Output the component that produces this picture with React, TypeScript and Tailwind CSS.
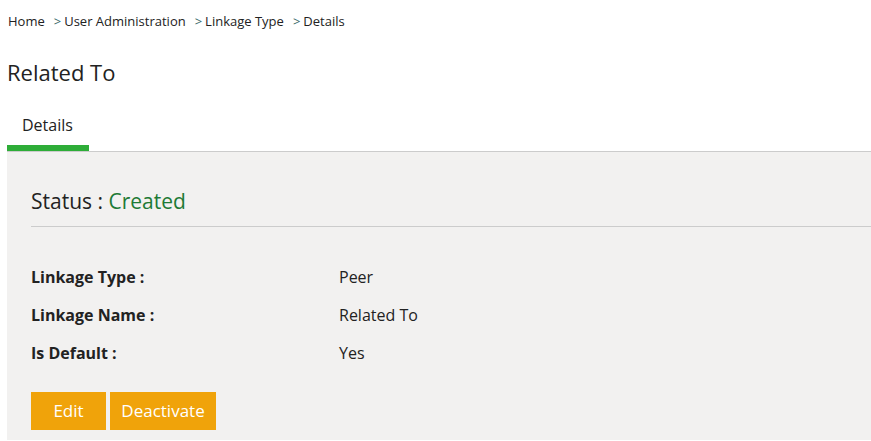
export default function App() {
  const rows = [
    { label: "Linkage Type :", value: "Peer" },
    { label: "Linkage Name :", value: "Related To" },
    { label: "Is Default :", value: "Yes" },
  ];

  return (
    <div className="min-h-[441px] bg-white pl-[7px] pt-px text-[#222] font-['Segoe_UI','Open_Sans',sans-serif]">
      <div className="flex h-[42px] items-center pl-px text-[13px] text-[#222]">
        <span>Home</span>
        <span className="ml-[9px] mr-[3px] text-[#3a6a6a]">&gt;</span>
        <span>User Administration</span>
        <span className="ml-[9px] mr-[3px] text-[#3a6a6a]">&gt;</span>
        <span>Linkage Type</span>
        <span className="ml-[9px] mr-[3px] text-[#3a6a6a]">&gt;</span>
        <span>Details</span>
      </div>

      <h1 className="mt-[12px] h-[34px] text-[22px] leading-[34px] text-[#222]">Related To</h1>

      <div className="mt-[14px] flex border-b border-[#cccccc]">
        <div className="flex h-[48px] w-[82px] flex-col">
          <div className="flex-1 pl-[15px] pt-[11px] text-[16px] leading-[22px] text-[#222]">Details</div>
          <div className="h-[6px] bg-[#2ead38]" />
        </div>
      </div>

      <div className="h-[288px] bg-[#f2f1f0] pl-[24px] pt-[34px]">
        <div className="h-[41px] border-b border-[#cccccc] text-[21px] leading-[30px]">
          Status : <span className="text-[#1e7a35]">Created</span>
        </div>

        <div className="mt-[31px] flex flex-col">
          {rows.map((r) => (
            <div key={r.label} className="flex h-[38px] items-center text-[16px]">
              <div className="w-[308px] font-bold">{r.label}</div>
              <div>{r.value}</div>
            </div>
          ))}
        </div>

        <div className="mt-[20px] flex gap-[4px]">
          <button className="h-[38px] w-[75px] bg-[#f0a30a] text-[17px] text-white">Edit</button>
          <button className="h-[38px] w-[106px] bg-[#f0a30a] text-[17px] text-white">Deactivate</button>
        </div>
      </div>
    </div>
  );
}
